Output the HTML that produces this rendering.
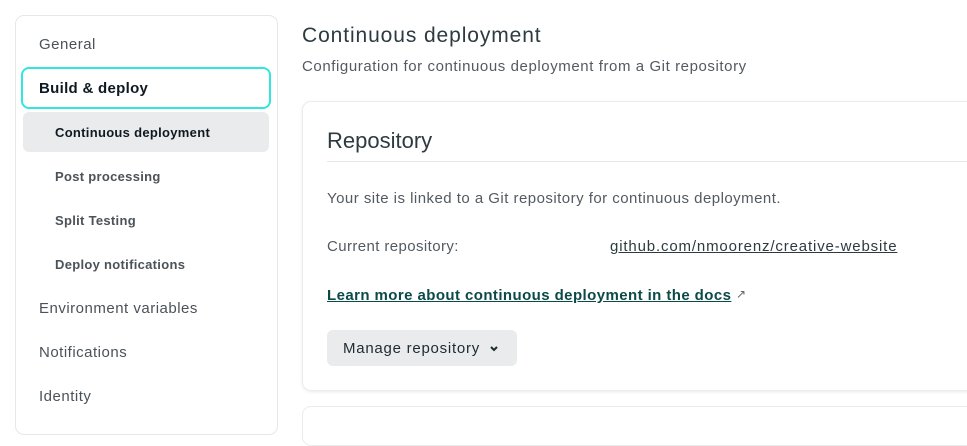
<!DOCTYPE html>
<html><head><meta charset="utf-8"><style>
*{box-sizing:border-box;margin:0;padding:0}
body{width:967px;height:418px;overflow:hidden;background:#fff;font-family:"Liberation Sans",sans-serif;position:relative;color:#2d3b41}
.side{position:absolute;left:15px;top:15px;width:263px;height:420px;border:1px solid #e6e7e8;border-radius:9px;background:#fff}
.it{position:absolute;left:39px;font-size:15px;color:#4b5258;line-height:20px;letter-spacing:.5px}
.sub{position:absolute;left:55px;font-size:13px;font-weight:bold;color:#4b5258;line-height:18px;letter-spacing:.3px}
.bd{position:absolute;left:21px;top:67px;width:250px;height:42px;border:2px solid #32e6e0;border-radius:8px}
.cd{position:absolute;left:23px;top:112px;width:246px;height:40px;background:#e9ebed;border-radius:6px}
.card{position:absolute;left:302px;top:101px;width:700px;height:290px;background:#fff;border:1px solid #ececec;border-radius:9px;box-shadow:0 1px 3px rgba(0,0,0,.08)}
.card2{position:absolute;left:302px;top:406px;width:700px;height:40px;background:#fff;border:1px solid #ececec;border-radius:9px}
.t{position:absolute;white-space:nowrap}
</style></head><body>
<div class="side"></div>
<div class="it" style="top:35px">General</div>
<div class="bd"></div>
<div class="it" style="top:79px;font-weight:bold;color:#0f1a20;letter-spacing:.3px">Build &amp; deploy</div>
<div class="cd"></div>
<div class="sub" style="top:124px;color:#0f1a20">Continuous deployment</div>
<div class="sub" style="top:168px">Post processing</div>
<div class="sub" style="top:212px">Split Testing</div>
<div class="sub" style="top:256px">Deploy notifications</div>
<div class="it" style="top:299px">Environment variables</div>
<div class="it" style="top:343px">Notifications</div>
<div class="it" style="top:387px">Identity</div>

<div class="t" style="left:302px;top:24px;font-size:21px;color:#2d3b41;letter-spacing:.9px">Continuous deployment</div>
<div class="t" style="left:302px;top:58px;font-size:15px;color:#545a61;letter-spacing:.58px">Configuration for continuous deployment from a Git repository</div>
<div class="card"></div>
<div class="card2"></div>
<div class="t" style="left:327px;top:128px;font-size:22px;color:#2d3b41">Repository</div>
<div style="position:absolute;left:327px;top:161px;width:640px;height:1px;background:#e6e7e8"></div>
<div class="t" style="left:327px;top:190px;font-size:15px;color:#545a61;letter-spacing:.47px">Your site is linked to a Git repository for continuous deployment.</div>
<div class="t" style="left:327px;top:238px;font-size:15px;color:#545a61;letter-spacing:.4px">Current repository:</div>
<div class="t" style="left:610px;top:238px;font-size:15px;color:#2d3b41;text-decoration:underline;letter-spacing:.85px">github.com/nmoorenz/creative-website</div>
<div class="t" style="left:327px;top:287px;font-size:15px;font-weight:bold;color:#0b4a47;text-decoration:underline;letter-spacing:.42px">Learn more about continuous deployment in the docs</div>
<div class="t" style="left:736px;top:287px;font-size:12px;color:#666">↗</div>
<div style="position:absolute;left:327px;top:330px;width:190px;height:36px;background:#e9ebed;border-radius:6px"></div>
<div class="t" style="left:343px;top:340px;font-size:15px;color:#1f2a30;letter-spacing:.75px">Manage repository</div>
<svg style="position:absolute;left:489px;top:345px" width="10" height="8" viewBox="0 0 10 8"><path d="M2 2l3 3 3-3" fill="none" stroke="#1f2a30" stroke-width="2"/></svg>
</body></html>
